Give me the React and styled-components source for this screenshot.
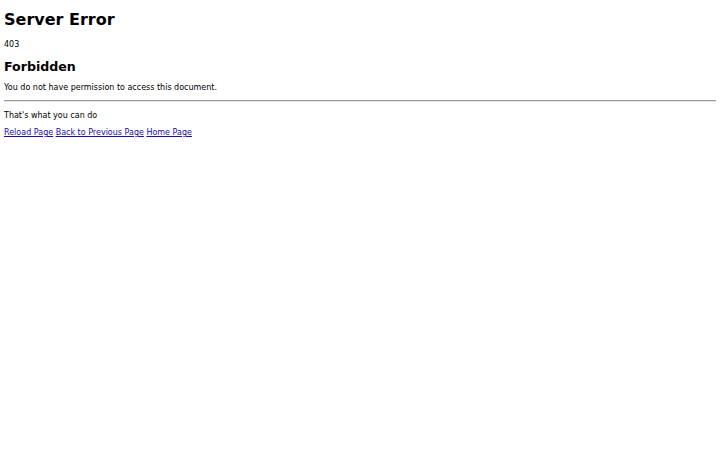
import React from "react";
import styled, { createGlobalStyle } from "styled-components";

const Global = createGlobalStyle`
  body { margin: 0; padding: 0 4px; background: #fff; color: #000; font-family: "DejaVu Sans", sans-serif; font-size: 8px; }
`;
const Page = styled.div`display: flex; flex-direction: column; padding-top: 9px;`;
const H1 = styled.h1`font-size: 16px; line-height: 22px; margin: 0 0 8px; font-weight: bold;`;
const H2 = styled.h2`font-size: 12.6px; line-height: 17px; margin: 8px 0 7px; font-weight: bold;`;
const P = styled.p`font-size: 8px; line-height: 11px; margin: 0;`;
const Rule = styled.hr`margin: 7px 0 8px; border: none; border-top: 1px solid #9a9a9a; border-bottom: 1px solid #e4e4e4; height: 0;`;
const Links = styled.div`display: flex; gap: 2.5px; margin-top: 6px; line-height: 11px;`;
const A = styled.a`color: #1a0dab; text-decoration: underline; font-size: 8px;`;

export default function App() {
  return (
    <Page>
      <Global />
      <H1>Server Error</H1>
      <P>403</P>
      <H2>Forbidden</H2>
      <P>You do not have permission to access this document.</P>
      <Rule />
      <P>That's what you can do</P>
      <Links>
        <A href="#">Reload Page</A>
        <A href="#">Back to Previous Page</A>
        <A href="#">Home Page</A>
      </Links>
    </Page>
  );
}
